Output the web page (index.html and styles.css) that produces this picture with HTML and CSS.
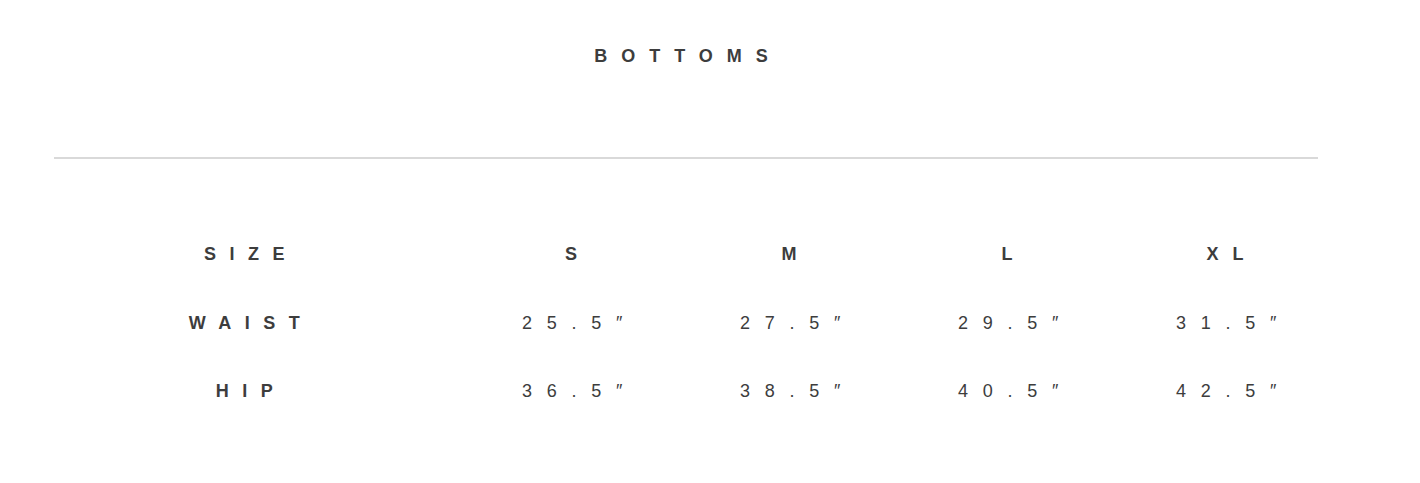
FILE: index.html
```html
<!DOCTYPE html>
<html>
<head>
<meta charset="utf-8">
<link rel="stylesheet" href="styles.css">
</head>
<body>
<div class="wrap">
  <h2 class="title">BOTTOMS</h2>
  <div class="rule"></div>
</div>
<div class="chart">
  <div class="row head">
    <div class="label">SIZE</div>
    <div class="cell">S</div>
    <div class="cell">M</div>
    <div class="cell">L</div>
    <div class="cell">XL</div>
  </div>
  <div class="row">
    <div class="label">WAIST</div>
    <div class="cell">25.5″</div>
    <div class="cell">27.5″</div>
    <div class="cell">29.5″</div>
    <div class="cell">31.5″</div>
  </div>
  <div class="row">
    <div class="label">HIP</div>
    <div class="cell">36.5″</div>
    <div class="cell">38.5″</div>
    <div class="cell">40.5″</div>
    <div class="cell">42.5″</div>
  </div>
</div>
</body>
</html>
```
FILE: styles.css
```css
html, body {
  margin: 0;
  padding: 0;
  background: #ffffff;
}
body {
  font-family: "Liberation Sans", Arial, sans-serif;
  color: #3d3d3d;
  font-size: 18px;
}
.wrap {
  width: 1264px;
  margin-left: 54px;
}
.title {
  margin: 46px 0 0 0;
  padding-left: 4px;
  font-size: 18px;
  line-height: 20px;
  font-weight: 700;
  letter-spacing: 14px;
  text-align: center;
}
.rule {
  margin-top: 91px;
  height: 2px;
  background: #d9d9d9;
}
.chart {
  margin-top: 85px;
  margin-left: 37px;
  display: flex;
  flex-direction: column;
  gap: 48.5px;
}
.row {
  display: grid;
  grid-template-columns: 432px repeat(4, 218px);
  line-height: 20px;
}
.label {
  text-align: center;
  font-weight: 700;
  letter-spacing: 13.5px;
  padding-right: 4px;
}
.cell {
  text-align: center;
  letter-spacing: 14.7px;
  padding-left: 3px;
}
.head .cell {
  font-weight: 700;
  letter-spacing: 14px;
  padding-left: 0;
}
```
